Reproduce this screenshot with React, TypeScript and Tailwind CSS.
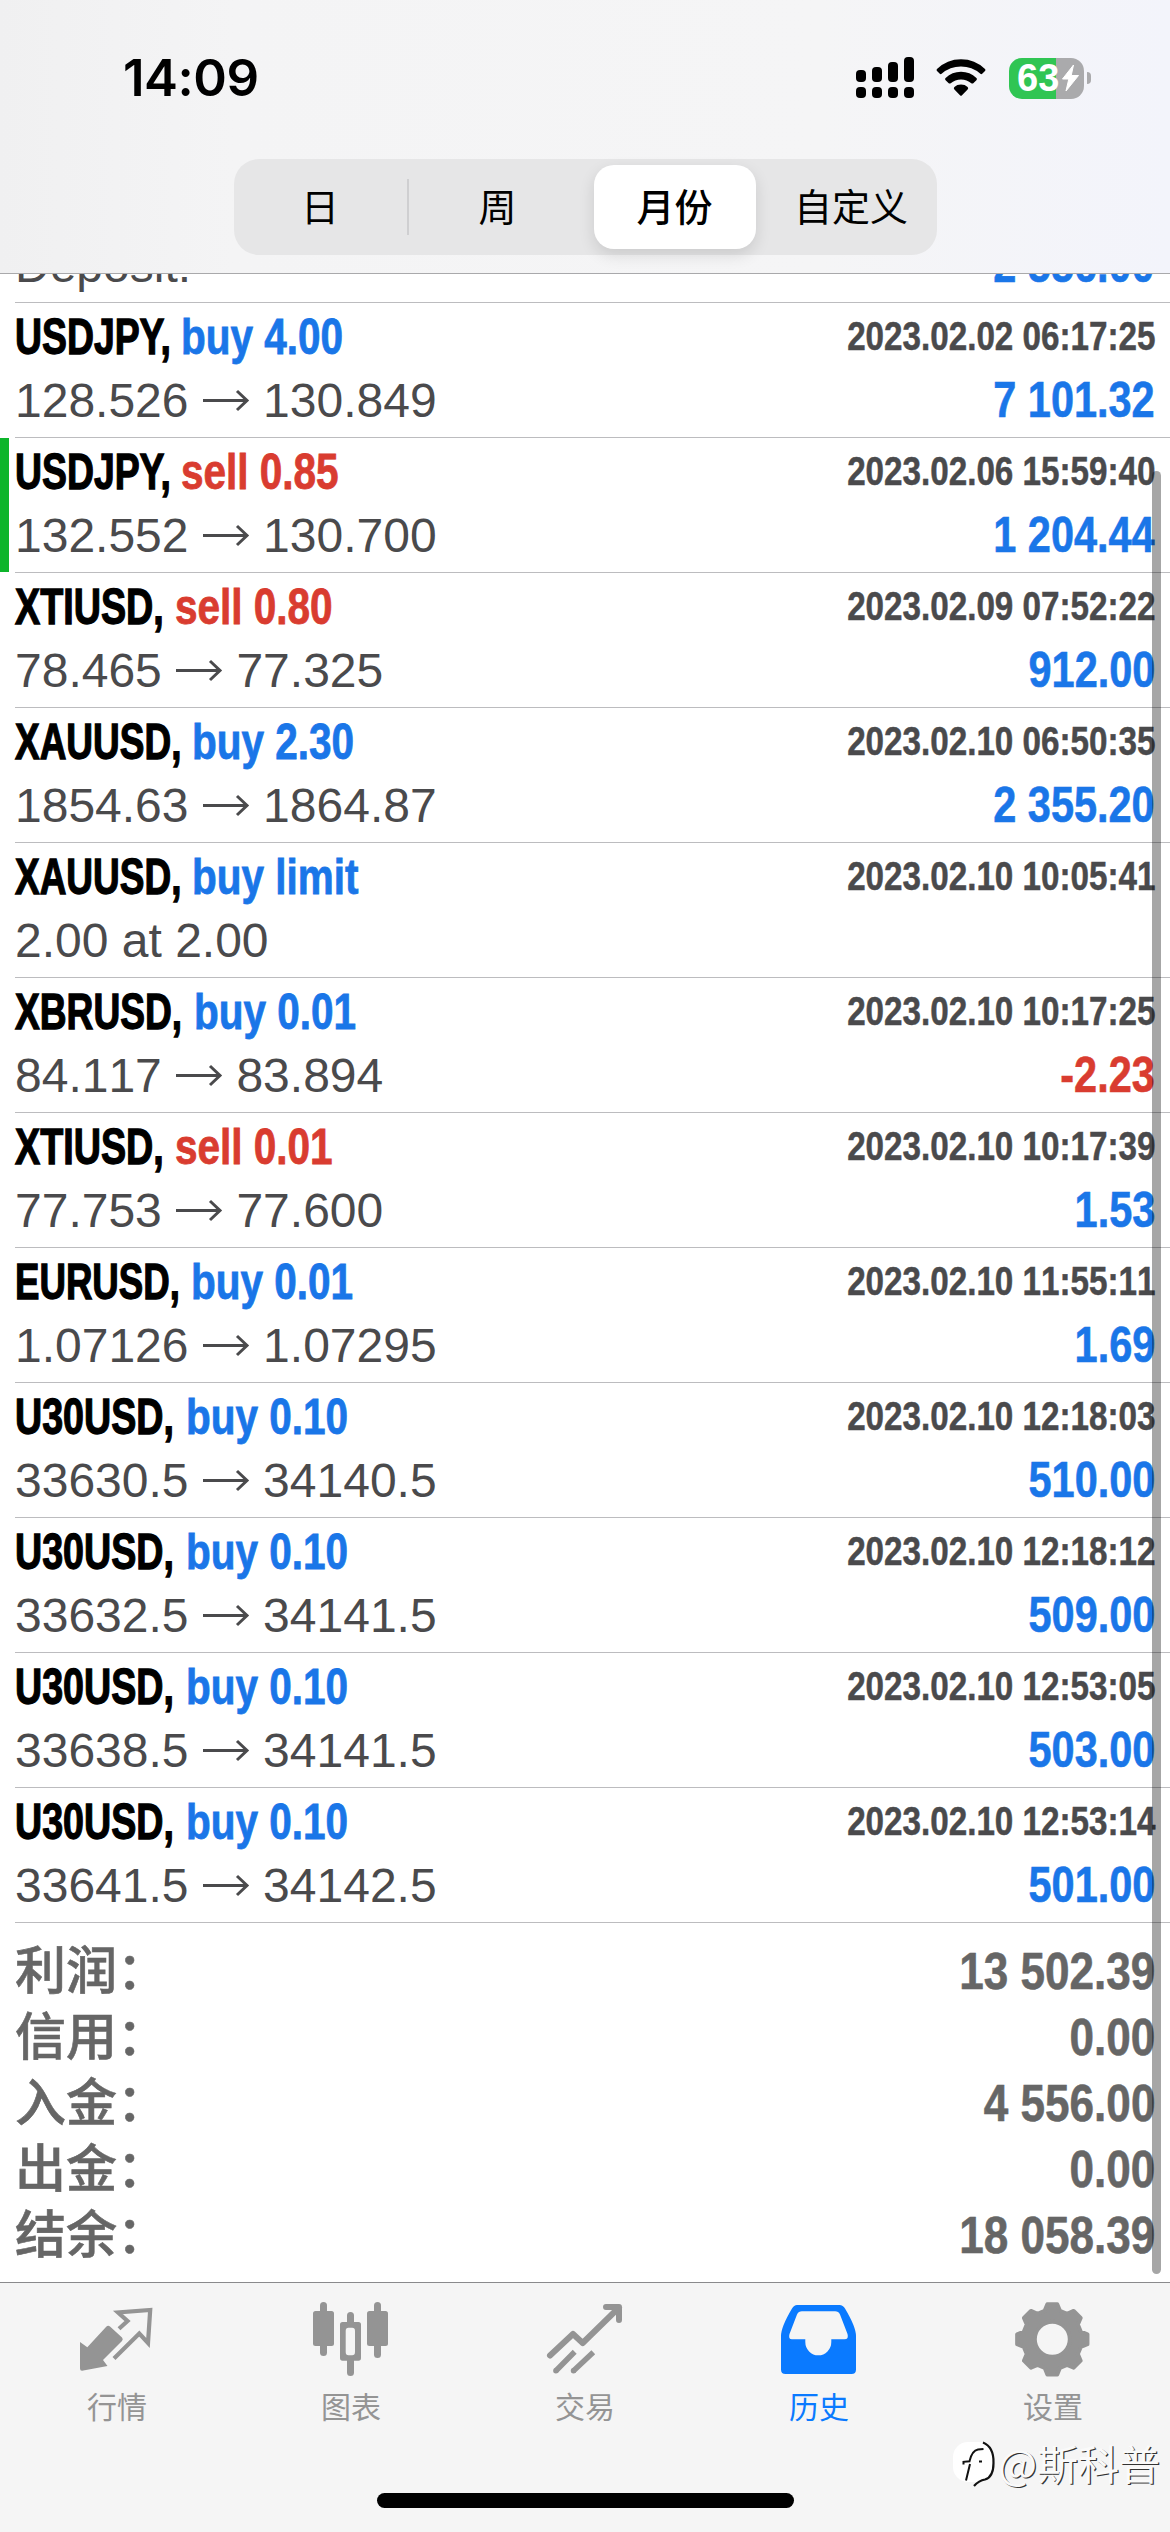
import type { ReactNode } from 'react';

type Trade = {
  symbol: string;
  symbolBox: string;
  side: string;
  sell?: boolean;
  from?: string;
  to?: string;
  note?: string;
  time: string;
  amount?: string;
  loss?: boolean;
  marked?: boolean;
};

const USDJPY = 'w-[166px] scale-x-[0.755]';
const XTIUSD = 'w-[160px] scale-x-[0.762]';
const XAUUSD = 'w-[177px] scale-x-[0.747]';
const XBRUSD = 'w-[179px] scale-x-[0.75]';
const EURUSD = 'w-[176px] scale-x-[0.74]';
const U30USD = 'w-[171px] scale-x-[0.76]';

const trades: Trade[] = [
  { symbol: 'USDJPY', symbolBox: USDJPY, side: 'buy 4.00', from: '128.526', to: '130.849', time: '2023.02.02 06:17:25', amount: '7 101.32' },
  { symbol: 'USDJPY', symbolBox: USDJPY, side: 'sell 0.85', sell: true, from: '132.552', to: '130.700', time: '2023.02.06 15:59:40', amount: '1 204.44', marked: true },
  { symbol: 'XTIUSD', symbolBox: XTIUSD, side: 'sell 0.80', sell: true, from: '78.465', to: '77.325', time: '2023.02.09 07:52:22', amount: '912.00' },
  { symbol: 'XAUUSD', symbolBox: XAUUSD, side: 'buy 2.30', from: '1854.63', to: '1864.87', time: '2023.02.10 06:50:35', amount: '2 355.20' },
  { symbol: 'XAUUSD', symbolBox: XAUUSD, side: 'buy limit', note: '2.00 at 2.00', time: '2023.02.10 10:05:41' },
  { symbol: 'XBRUSD', symbolBox: XBRUSD, side: 'buy 0.01', from: '84.117', to: '83.894', time: '2023.02.10 10:17:25', amount: '-2.23', loss: true },
  { symbol: 'XTIUSD', symbolBox: XTIUSD, side: 'sell 0.01', sell: true, from: '77.753', to: '77.600', time: '2023.02.10 10:17:39', amount: '1.53' },
  { symbol: 'EURUSD', symbolBox: EURUSD, side: 'buy 0.01', from: '1.07126', to: '1.07295', time: '2023.02.10 11:55:11', amount: '1.69' },
  { symbol: 'U30USD', symbolBox: U30USD, side: 'buy 0.10', from: '33630.5', to: '34140.5', time: '2023.02.10 12:18:03', amount: '510.00' },
  { symbol: 'U30USD', symbolBox: U30USD, side: 'buy 0.10', from: '33632.5', to: '34141.5', time: '2023.02.10 12:18:12', amount: '509.00' },
  { symbol: 'U30USD', symbolBox: U30USD, side: 'buy 0.10', from: '33638.5', to: '34141.5', time: '2023.02.10 12:53:05', amount: '503.00' },
  { symbol: 'U30USD', symbolBox: U30USD, side: 'buy 0.10', from: '33641.5', to: '34142.5', time: '2023.02.10 12:53:14', amount: '501.00' },
];

const totals = [
  ['利润：', '13 502.39'],
  ['信用：', '0.00'],
  ['入金：', '4 556.00'],
  ['出金：', '0.00'],
  ['结余：', '18 058.39'],
];

const cjk = "font-['Noto_Sans_CJK_SC',sans-serif]";

function StatusBar() {
  return (
    <div className="flex h-[159px] items-start justify-between pr-[79px] pl-[123px]">
      <span className="pt-[48px] font-['Inter',sans-serif] text-[51px] leading-[60px] font-semibold tracking-[-0.5px] text-black">14:09</span>
      <div className="flex items-center pt-[57px]">
        <svg width="58" height="42" viewBox="0 0 58 42">
          <rect x="0" y="13" width="10" height="12" rx="4" />
          <rect x="16" y="10" width="10" height="15" rx="4" />
          <rect x="32" y="5" width="10" height="20" rx="4" />
          <rect x="48" y="0" width="10" height="25" rx="4" />
          <rect x="0" y="30" width="10" height="11" rx="4" />
          <rect x="16" y="30" width="10" height="11" rx="4" />
          <rect x="32" y="30" width="10" height="11" rx="4" />
          <rect x="48" y="30" width="10" height="11" rx="4" />
        </svg>
        <svg className="ml-[22px]" width="50" height="42" viewBox="0 0 50 42">
          <path d="M1 12 Q11 2.2 25 2.2 Q39 2.2 49 12 Q50 13 49 14 L46.2 16.8 Q45.3 17.6 44.4 16.8 Q36 9.6 25 9.6 Q14 9.6 5.6 16.8 Q4.7 17.6 3.8 16.8 L1 14 Q0 13 1 12Z" />
          <path d="M9.6 21 Q16 14.8 25 14.8 Q34 14.8 40.4 21 Q41.6 22 40.4 23.2 L37.3 26.2 Q36.3 27 35.3 26.2 Q31 22.4 25 22.4 Q19 22.4 14.7 26.2 Q13.7 27 12.7 26.2 L9.6 23.2 Q8.4 22 9.6 21Z" />
          <path d="M18.4 30 Q21 27.6 25 27.6 Q29 27.6 31.6 30 Q32.8 31.2 31.6 32.4 L26 38.2 Q25 39.2 24 38.2 L18.4 32.4 Q17.2 31.2 18.4 30Z" />
        </svg>
        <div className="ml-[23px] flex h-[41px] w-[75px] items-center overflow-hidden rounded-[13px] bg-[linear-gradient(90deg,#30c553_0_47px,#aaaaac_47px)] pl-[8px]">
          <span className="w-[44px] font-['Liberation_Sans',sans-serif] text-[38px] leading-[41px] font-bold text-white">63</span>
          <svg width="18" height="28" viewBox="0 0 18 28">
            <path d="M12.5 1 L1.5 15 H7.8 L5 27 L17.5 11.5 H10.2 Z" fill="#fff" stroke="#fff" strokeLinejoin="round" />
          </svg>
        </div>
        <div className="ml-[3px] h-[12px] w-[4px] rounded-r-full bg-[#aaaaac]" />
      </div>
    </div>
  );
}

function Segments() {
  return (
    <div className={`mx-auto grid h-[96px] w-[703px] grid-cols-[175px_178px_176px_174px] items-center rounded-[25px] bg-[#e6e6e7] text-center text-[38px] leading-[56px] text-black ${cjk}`}>
      <span className="flex h-[56px] items-center justify-center border-r-2 border-[#cfcfd1] pb-[4px]">日</span>
      <span className="pb-[4px]">周</span>
      <span className="mx-auto flex h-[84px] w-[162px] items-center justify-center rounded-[20px] bg-white pb-[4px] font-medium shadow-[0_6px_16px_rgba(0,0,0,0.12)]">月份</span>
      <span className="pb-[4px] pl-[3px]">自定义</span>
    </div>
  );
}

function Arrow() {
  return (
    <svg className="mx-[13.3px] inline-block align-baseline" width="48" height="28" viewBox="0 0 48 28" fill="none" stroke="#4a4a4c" strokeWidth="3">
      <path d="M1 11.5 H45 M35 2 L45 11.5 L35 21" />
    </svg>
  );
}

function Row({ first, time, second, amount, loss, marked }: { first?: ReactNode; time?: string; second: ReactNode; amount?: string; loss?: boolean; marked?: boolean }) {
  return (
    <div className="relative h-[135px] shrink-0 pl-[15px]">
      {marked && <div className="absolute top-0 left-0 h-[134px] w-[9px] bg-[#0db52b]" />}
      <div className="flex h-[135px] flex-col border-b border-[#bcbcbf] pt-[4px] pr-[15px]">
        <div className="flex h-[60px] justify-between">
          <div className="flex text-[49.5px] leading-[60px] font-bold whitespace-pre">{first}</div>
          <div className="origin-right scale-x-[0.83] text-[40px] leading-[58px] font-bold whitespace-nowrap text-[#4a4a4c] [-webkit-text-stroke:0.5px_currentColor] [font-kerning:none]">{time}</div>
        </div>
        <div className="flex justify-between">
          <div className="text-[48px] leading-[67px] whitespace-nowrap text-[#4a4a4c] [font-kerning:none]">{second}</div>
          <div className={`origin-right scale-x-[0.838] text-[49.5px] leading-[66px] font-bold whitespace-nowrap [-webkit-text-stroke:0.6px_currentColor] [font-kerning:none] ${loss ? 'text-[#d93c30]' : 'text-[#1a76e8]'}`}>{amount}</div>
        </div>
      </div>
    </div>
  );
}

function TradeRow({ trade: t }: { trade: Trade }) {
  return (
    <Row
      first={
        <>
          <span className={`origin-left text-black [-webkit-text-stroke:1.3px_currentColor] ${t.symbolBox}`}>{t.symbol},</span>
          <span className={`origin-left scale-x-[0.818] [-webkit-text-stroke:0.8px_currentColor] ${t.sell ? 'text-[#d93c30]' : 'text-[#1a76e8]'}`}>{t.side}</span>
        </>
      }
      time={t.time}
      second={t.note ?? <>{t.from}<Arrow />{t.to}</>}
      amount={t.amount}
      loss={t.loss}
      marked={t.marked}
    />
  );
}

function gearPath() {
  const points: string[] = [];
  for (let i = 0; i < 8; i++) {
    const teeth: [number, number][] = [[-15, 29.5], [-8, 35.5], [8, 35.5], [15, 29.5]];
    for (const [offset, radius] of teeth) {
      const angle = ((i * 45 + offset) * Math.PI) / 180;
      points.push(`${(39.3 + radius * Math.sin(angle)).toFixed(2)} ${(39.3 - radius * Math.cos(angle)).toFixed(2)}`);
    }
  }
  return `M${points.join('L')}Z M56.8 39.3a17.5 17.5 0 1 0 -35 0a17.5 17.5 0 1 0 35 0Z`;
}

const tabs: { label: string; active?: boolean; icon: ReactNode }[] = [
  {
    label: '行情',
    icon: (
      <>
        <path d="M3 42 L10.3 47.3 L29 27 Q31 25 33 26.5 L45 37.5 Q46.5 39.3 45 41 L26 60 L30.5 66 L5 70.7 Q3 70.7 3 68.5Z" />
        <path d="M42 28.7 L50.5 21 L41 12.5 L73.2 10 L71 43 L62.3 33.5 L37 58.5" fill="none" stroke="currentColor" strokeWidth="4.2" />
      </>
    ),
  },
  {
    label: '图表',
    icon: (
      <>
        <rect x="2" y="11" width="21" height="35" rx="2.5" />
        <rect x="9" y="2" width="7" height="54" rx="3.5" />
        <path fillRule="evenodd" d="M31.5 22H47.5Q50 22 50 24.5V58Q50 60.7 47.5 60.7H31.5Q29 60.7 29 58V24.5Q29 22 31.5 22ZM37.5 27.7Q34.7 27.7 34.7 31V52Q34.7 55.3 37.5 55.3H41.2Q44 55.3 44 52V31Q44 27.7 41.2 27.7Z" />
        <path d="M36 23V15.5a3.5 3.5 0 0 1 7 0V23ZM36 60V72.5a3.5 3.5 0 0 0 7 0V60Z" />
        <rect x="56" y="11" width="21" height="35" rx="2.5" />
        <rect x="63" y="2" width="7" height="56" rx="3.5" />
      </>
    ),
  },
  {
    label: '交易',
    icon: (
      <>
        <path d="M5 55.5 L28 34 L37.7 43 L74 7.5 M61 7 H74 V20" fill="none" stroke="currentColor" strokeWidth="6" strokeLinecap="round" strokeLinejoin="round" />
        <path d="M10.7 71 L29.7 51.8 M28.3 71 L48.3 52.2" fill="none" stroke="currentColor" strokeWidth="5.5" />
        <circle cx="10.9" cy="70.8" r="2.75" />
        <circle cx="28.5" cy="70.8" r="2.75" />
      </>
    ),
  },
  {
    label: '历史',
    active: true,
    icon: (
      <path fillRule="evenodd" d="M18 5H60.5Q64 5 66 8.5Q77 27 77 36V69.5Q77 74 72.5 74H6.5Q2 74 2 69.5V36Q2 27 13 8.5Q15 5 18 5ZM23 11.3Q19.5 11.3 18 14.5L10.5 34Q9 39.3 13 39.3H26.3V42A13 13.3 0 0 0 52.3 42V39.3H65.5Q70 39.3 68.5 34L61 14.5Q59.5 11.3 56 11.3Z" />
    ),
  },
  { label: '设置', icon: <path fillRule="evenodd" stroke="currentColor" strokeWidth="4" strokeLinejoin="round" d={gearPath()} /> },
];

function TabBar() {
  return (
    <div className="relative flex h-[250px] flex-col border-t border-[#8a8a8c] bg-[#f5f5f5]">
      <div className={`grid grid-cols-5 pt-[17px] ${cjk}`}>
        {tabs.map((tab) => (
          <div key={tab.label} className={`flex flex-col items-center ${tab.active ? 'text-[#0a7aff]' : 'text-[#949494]'}`}>
            <svg width="80" height="80" viewBox="0 0 80 80" fill="currentColor">{tab.icon}</svg>
            <span className="mt-[3px] text-[30px] leading-[44px]">{tab.label}</span>
          </div>
        ))}
      </div>
      <div className="mx-auto mt-auto mb-[24px] h-[15px] w-[417px] rounded-full bg-black" />
      <div className="absolute right-[10px] bottom-[43px] flex items-center">
        <svg width="46" height="50" viewBox="0 0 46 50" fill="none">
          <rect x="1" y="3" width="40" height="40" rx="15" fill="#fff" />
          <path d="M31 3.5 Q42 8 41.5 24 Q41.5 38 33 40.5 Q27 41.5 22 47" stroke="#111" strokeWidth="2.2" />
          <path d="M14 41.5 L18 25 M11.5 25.5 V22.8 L17.5 22.3 Q20 11.5 26 10.5 L31.5 10 M27 22.5 H30" stroke="#111" strokeWidth="2" />
        </svg>
        <span className={`-mt-[4px] text-[41px] leading-[50px] whitespace-nowrap text-[#fafafa] [text-shadow:1.2px_1px_0_#333] ${cjk}`}>@斯科普</span>
      </div>
    </div>
  );
}

export default function App() {
  return (
    <div className="flex h-[2532px] w-[1170px] flex-col overflow-hidden bg-white font-['Liberation_Sans',Arial,sans-serif]">
      <header className="h-[274px] shrink-0 border-b border-[#a9a9ab] bg-[linear-gradient(90deg,#f0f0f1,#f4f4f5_20%,#f5f5f6_70%,#f3f4fb)]">
        <StatusBar />
        <Segments />
      </header>
      <main className="relative flex h-[2008px] shrink-0 flex-col overflow-hidden">
        <div className="-mt-[106px] flex flex-col">
          <Row second="Deposit:" amount="2 556.00" />
          {trades.map((trade) => (
            <TradeRow key={trade.time} trade={trade} />
          ))}
        </div>
        <div className="flex flex-col pt-[15px] pr-[15px] pl-[15px] text-[#666666]">
          {totals.map(([label, value]) => (
            <div key={label} className="flex h-[66px] justify-between">
              <span className={`-mt-[4px] text-[51px] leading-[66px] font-medium [-webkit-text-stroke:0.6px_currentColor] ${cjk}`}>{label}</span>
              <span className="origin-right scale-x-[0.848] text-[52px] leading-[66px] font-bold [-webkit-text-stroke:0.6px_currentColor]">{value}</span>
            </div>
          ))}
        </div>
        <div className="absolute top-[197px] right-[9px] h-[1803px] w-[9px] rounded-full bg-black/35" />
      </main>
      <TabBar />
    </div>
  );
}
